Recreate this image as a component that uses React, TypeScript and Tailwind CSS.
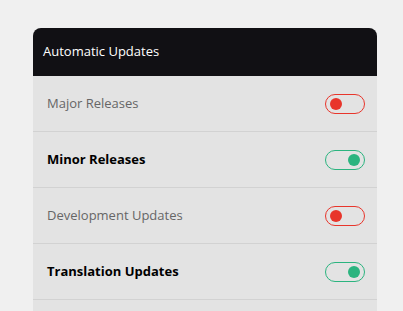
import { useState } from "react";

type Item = { label: string; on: boolean };

const items: Item[] = [
  { label: "Major Releases", on: false },
  { label: "Minor Releases", on: true },
  { label: "Development Updates", on: false },
  { label: "Translation Updates", on: true },
];

function Toggle({ on, onClick }: { on: boolean; onClick: () => void }) {
  return (
    <button
      type="button"
      onClick={onClick}
      className={
        on
          ? "flex h-5 w-10 items-center justify-end rounded-full border border-[#2bb47f] px-[4px]"
          : "flex h-5 w-10 items-center justify-start rounded-full border border-[#e8352b] px-[4px]"
      }
    >
      <span className={on ? "size-3 rounded-full bg-[#2bb47f]" : "size-3 rounded-full bg-[#e8352b]"} />
    </button>
  );
}

export default function App() {
  const [state, setState] = useState(items);

  return (
    <div className="h-[311px] overflow-hidden bg-[#f0f0f0] px-[33px] pt-[28px] font-['Open_Sans',sans-serif]">
      <div className="w-[344px] overflow-hidden rounded-t-lg bg-[#e3e3e3]">
        <div className="flex h-12 items-center bg-[#111014] px-[10px] pb-px text-[13px] text-white">
          Automatic Updates
        </div>
        {state.map((it, i) => (
          <div
            key={it.label}
            className="flex h-14 items-center justify-between border-b border-[#d2d2d2] pl-[14px] pr-[12px]"
          >
            <span
              className={
                it.on ? "text-[13px] font-bold text-black" : "text-[13px] text-[#666]"
              }
            >
              {it.label}
            </span>
            <Toggle
              on={it.on}
              onClick={() =>
                setState((s) => s.map((x, j) => (j === i ? { ...x, on: !x.on } : x)))
              }
            />
          </div>
        ))}
        {/* next row continues below the fold */}
        <div className="h-14" />
      </div>
    </div>
  );
}
